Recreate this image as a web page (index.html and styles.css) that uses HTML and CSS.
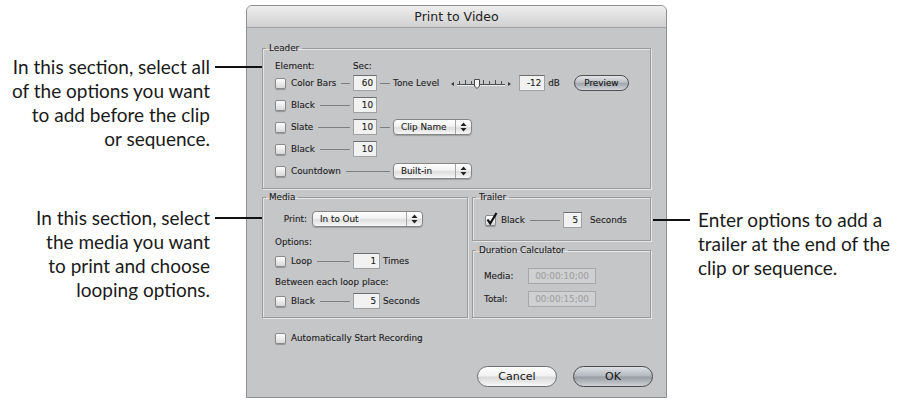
FILE: index.html
```html
<!DOCTYPE html>
<html>
<head>
    <meta charset="utf-8">
    <title>Print to Video</title>
    <link rel="stylesheet" href="styles.css">
</head>

<body>
<div class="page">
    <div class="notes notes-left">
        <p class="note note-leader">In this section, select all<br>of the options you want<br>to add before the clip<br>or sequence.</p>
        <p class="note note-media">In this section, select<br>the media you want<br>to print and choose<br>looping options.</p>
    </div>

    <div class="dialog">
        <div class="titlebar">Print to Video</div>
        <div class="dialog-body">

            <fieldset class="group leader">
                <legend>Leader</legend>
                <div class="head">
                    <span class="h-el">Element:</span>
                    <span>Sec:</span>
                </div>
                <div class="row">
                    <div class="lead"><span class="check"></span><span>Color Bars</span><span class="wire"></span></div>
                    <span class="field f-sec">60</span>
                    <span class="wire wire-short"></span>
                    <span class="tone">Tone Level</span>
                    <svg class="slider" width="62" height="14" viewBox="0 0 62 14">
                        <path d="M1 8 L4 6 L4 10 Z" fill="#3a3a3a"/>
                        <path d="M61 8 L58 6 L58 10 Z" fill="#3a3a3a"/>
                        <line x1="7" y1="8.5" x2="55" y2="8.5" stroke="#4d4d4d" stroke-width="1"/>
                        <line x1="7" y1="9.5" x2="55" y2="9.5" stroke="#eeeeee" stroke-width="1"/>
                        <path d="M9.5 5 V8 M15.5 4 V8 M21.5 5 V8 M33.5 4 V8 M39.5 5 V8 M45.5 4 V8 M51.5 5 V8" stroke="#4d4d4d" stroke-width="1"/>
                        <path d="M24.5 3.5 H29.5 V10 L27 12.5 L24.5 10 Z" fill="#f4f4f4" stroke="#4a4a4a" stroke-width="1"/>
                    </svg>
                    <span class="field f-db">-12</span>
                    <span class="unit">dB</span>
                    <span class="btn btn-small">Preview</span>
                </div>
                <div class="row">
                    <div class="lead"><span class="check"></span><span>Black</span><span class="wire"></span></div>
                    <span class="field f-sec">10</span>
                </div>
                <div class="row">
                    <div class="lead"><span class="check"></span><span>Slate</span><span class="wire"></span></div>
                    <span class="field f-sec">10</span>
                    <span class="wire wire-short"></span>
                    <span class="popup p-leader"><span class="p-text">Clip Name</span><span class="arrows"><svg width="7" height="10" viewBox="0 0 7 10"><path d="M3.5 0.5 L6.5 4 L0.5 4 Z M3.5 9.5 L6.5 6 L0.5 6 Z" fill="#222"/></svg></span></span>
                </div>
                <div class="row">
                    <div class="lead"><span class="check"></span><span>Black</span><span class="wire"></span></div>
                    <span class="field f-sec">10</span>
                </div>
                <div class="row">
                    <div class="lead lead-long"><span class="check"></span><span>Countdown</span><span class="wire"></span></div>
                    <span class="popup p-leader"><span class="p-text">Built-in</span><span class="arrows"><svg width="7" height="10" viewBox="0 0 7 10"><path d="M3.5 0.5 L6.5 4 L0.5 4 Z M3.5 9.5 L6.5 6 L0.5 6 Z" fill="#222"/></svg></span></span>
                </div>
            </fieldset>

            <div class="lower">
                <fieldset class="group media">
                    <legend>Media</legend>
                    <div class="print-row">
                        <span class="print-label">Print:</span>
                        <span class="popup p-media"><span class="p-text">In to Out</span><span class="arrows"><svg width="7" height="10" viewBox="0 0 7 10"><path d="M3.5 0.5 L6.5 4 L0.5 4 Z M3.5 9.5 L6.5 6 L0.5 6 Z" fill="#222"/></svg></span></span>
                    </div>
                    <div class="caption c-options">Options:</div>
                    <div class="m-row">
                        <div class="lead"><span class="check"></span><span>Loop</span><span class="wire"></span></div>
                        <span class="field f-media">1</span>
                        <span class="after">Times</span>
                    </div>
                    <div class="caption c-between">Between each loop place:</div>
                    <div class="m-row">
                        <div class="lead"><span class="check"></span><span>Black</span><span class="wire"></span></div>
                        <span class="field f-media">5</span>
                        <span class="after">Seconds</span>
                    </div>
                </fieldset>

                <div class="right-col">
                    <fieldset class="group trailer">
                        <legend>Trailer</legend>
                        <div class="m-row">
                            <div class="lead"><span class="check check-on"><svg width="13" height="14" viewBox="0 0 13 14"><path d="M2.5 7.5 L5.2 11.5 L11.5 1" stroke="#111" stroke-width="2.2" fill="none"/></svg></span><span>Black</span><span class="wire"></span></div>
                            <span class="field f-trailer">5</span>
                            <span class="after after-wide">Seconds</span>
                        </div>
                    </fieldset>
                    <fieldset class="group duration">
                        <legend>Duration Calculator</legend>
                        <div class="d-row">
                            <span class="d-label">Media:</span>
                            <span class="field f-time">00:00:10;00</span>
                        </div>
                        <div class="d-row d-second">
                            <span class="d-label">Total:</span>
                            <span class="field f-time">00:00:15;00</span>
                        </div>
                    </fieldset>
                </div>
            </div>

            <div class="auto-row"><span class="check"></span><span>Automatically Start Recording</span></div>

            <div class="actions">
                <span class="btn btn-cancel">Cancel</span>
                <span class="btn btn-ok">OK</span>
            </div>
        </div>
    </div>

    <div class="notes notes-right">
        <p class="note note-trailer">Enter options to add a<br>trailer at the end of the<br>clip or sequence.</p>
    </div>
</div>
</body>
</html>
```

FILE: styles.css
```css
body {
    margin: 0;
    background-color: #ffffff;
}

.page {
    display: flex;
    align-items: flex-start;
}

/* callout notes */

.notes {
    font-family: "Lato", "Open Sans", sans-serif;
    font-size: 19px;
    line-height: 24px;
    color: #1a1a1a;
}

.notes-left {
    flex: none;
    width: 246px;
    box-sizing: border-box;
    padding-right: 36px;
    text-align: right;
}

.notes-right {
    flex: 1;
    padding-left: 31px;
}

.note {
    position: relative;
    margin: 0;
}

.note::after {
    content: "";
    position: absolute;
    top: 11px;
    border-top: 2px solid #111111;
}

.notes-left .note::after {
    left: calc(100% + 5px);
    width: 47px;
}

.notes-right .note::after {
    left: -45px;
    width: 37px;
}

.note-leader {
    margin-top: 55px;
}

.note-media {
    margin-top: 55px;
}

.note-trailer {
    margin-top: 208px;
}

/* dialog */

.dialog {
    flex: none;
    width: 421px;
    height: 393px;
    margin-top: 5px;
    box-sizing: border-box;
    border: 1px solid #8f8f8f;
    border-radius: 6px 6px 0 0;
    background-color: #c5c6c8;
    font-family: "DejaVu Sans", sans-serif;
    font-size: 8.8px;
    color: #1d1d1d;
    -webkit-text-stroke: 0.12px currentColor;
}

.titlebar {
    height: 21px;
    line-height: 21px;
    text-align: center;
    font-size: 12.5px;
    color: #222222;
    -webkit-text-stroke: 0;
    border-bottom: 1px solid #a2a2a2;
    border-radius: 5px 5px 0 0;
    background: linear-gradient(#eeeeee, #d0d0d0);
}

.dialog-body {
    padding: 14px 15px 0;
}

.group {
    margin: 0;
    padding: 0 12px;
    min-width: 0;
    border: 1px solid #9b9b9b;
    box-shadow: 1px 1px 0 rgba(255, 255, 255, 0.55), inset 1px 1px 0 rgba(255, 255, 255, 0.55);
}

.group legend {
    margin-left: -9px;
    padding: 0 3px;
    line-height: 12px;
}

.leader {
    padding-top: 5px;
    padding-bottom: 6px;
}

.head {
    display: flex;
    align-items: center;
    height: 13px;
}

.h-el {
    width: 78px;
}

.row {
    display: flex;
    align-items: center;
    height: 22px;
}

.lead {
    flex: none;
    display: flex;
    align-items: center;
    width: 78px;
}

.lead-long {
    width: 118px;
}

.check {
    flex: none;
    position: relative;
    width: 11px;
    height: 11px;
    margin-right: 5px;
    box-sizing: border-box;
    border: 1px solid #8a8a8a;
    border-radius: 2px;
    background: linear-gradient(#fdfdfd, #d9d9d9);
    box-shadow: 0 1px 1px rgba(0, 0, 0, 0.25);
}

.check-on svg {
    position: absolute;
    left: -1px;
    top: -4px;
}

.wire {
    flex: 1;
    height: 1px;
    margin: 0 3px 0 5px;
    background-color: #7f7f7f;
}

.wire-short {
    flex: none;
    width: 10px;
    margin: 0 3px;
}

.field {
    flex: none;
    height: 16px;
    box-sizing: border-box;
    padding-right: 3px;
    line-height: 14px;
    text-align: right;
    border: 1px solid #a0a0a0;
    border-top-color: #6d6d6d;
    background-color: #f2f2f2;
}

.f-sec {
    width: 24px;
}

.tone {
    margin-right: 11px;
}

.slider {
    flex: none;
}

.f-db {
    width: 26px;
    margin-left: 7px;
}

.unit {
    margin-left: 3px;
}

.popup {
    flex: none;
    display: flex;
    height: 16px;
    box-sizing: border-box;
    border: 1px solid #858585;
    border-radius: 4px;
    background: linear-gradient(#ffffff, #f1f1f1 45%, #dedede 55%, #f6f6f6);
    box-shadow: 0 1px 1px rgba(0, 0, 0, 0.2);
}

.p-text {
    flex: 1;
    padding-left: 7px;
    line-height: 14px;
}

.arrows {
    display: flex;
    align-items: center;
    justify-content: center;
    width: 15px;
    border-left: 1px solid #a5a5a5;
}

.p-leader {
    width: 79px;
}

.p-media {
    width: 111px;
}

.btn {
    flex: none;
    display: flex;
    align-items: center;
    justify-content: center;
    box-sizing: border-box;
    color: #151515;
}

.btn-small {
    width: 55px;
    height: 16px;
    margin-left: 14px;
    border: 1px solid #505050;
    border-radius: 8px;
    background: linear-gradient(#e3e5e8, #b8bcc1 48%, #9fa4aa 52%, #d2d5d9);
}

/* lower part */

.lower {
    display: flex;
    align-items: flex-start;
    gap: 4px;
    margin-top: 2px;
}

.media {
    flex: none;
    width: 206px;
    box-sizing: border-box;
    padding-top: 6px;
    padding-bottom: 6px;
}

.print-row {
    display: flex;
    align-items: center;
    height: 20px;
}

.print-label {
    width: 37px;
    box-sizing: border-box;
    padding-right: 5px;
    text-align: right;
}

.caption {
    height: 14px;
    line-height: 14px;
}

.c-options {
    margin-top: 6px;
}

.c-between {
    margin-top: 4px;
}

.m-row {
    display: flex;
    align-items: center;
    height: 20px;
    margin-top: 2px;
}

.f-media {
    width: 27px;
}

.after {
    margin-left: 3px;
}

.right-col {
    flex: 1;
    display: flex;
    flex-direction: column;
}

.trailer {
    padding-top: 7px;
    padding-bottom: 10px;
}

.trailer .m-row {
    margin-top: 0;
}

.f-trailer {
    width: 19px;
}

.after-wide {
    margin-left: 8px;
}

.duration {
    margin-top: 3px;
    padding: 11px 11px 9px;
}

.duration legend {
    margin-left: -8px;
}

.d-row {
    display: flex;
    align-items: center;
    height: 18px;
}

.d-second {
    margin-top: 5px;
}

.d-label {
    width: 44px;
}

.f-time {
    width: 68px;
    padding-right: 0;
    text-align: center;
    color: #a2a2a2;
    border-color: #a8a8a8;
    background-color: #cfd0d2;
}

.auto-row {
    display: flex;
    align-items: center;
    height: 16px;
    margin-top: 12px;
    padding-left: 13px;
}

.actions {
    display: flex;
    justify-content: flex-end;
    gap: 16px;
    margin-top: 20px;
    margin-right: -2px;
}

.btn-cancel,
.btn-ok {
    width: 80px;
    height: 21px;
    border-radius: 11px;
    font-size: 11px;
    -webkit-text-stroke: 0;
}

.btn-cancel {
    border: 1px solid #6f6f6f;
    background: linear-gradient(#ffffff, #f2f2f2 45%, #dadada 55%, #f7f7f7);
}

.btn-ok {
    border: 1px solid #4a4a4a;
    background: linear-gradient(#dde0e4, #b3b8be 48%, #979ca3 52%, #cdd1d5);
}
```
